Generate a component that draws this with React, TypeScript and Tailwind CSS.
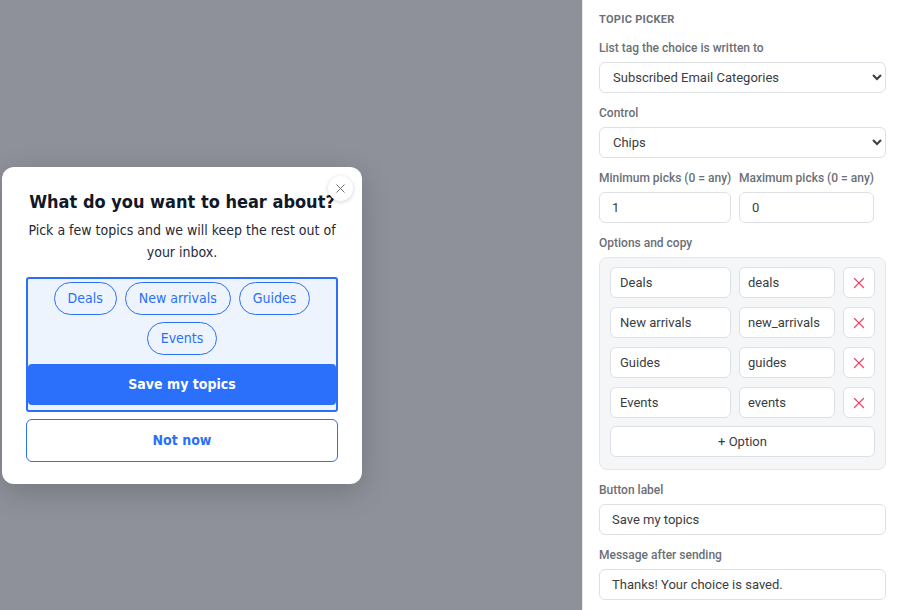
import { X } from "lucide-react";

const modalFont = {
  fontFamily: '"DejaVu Sans Condensed", "DejaVu Sans", sans-serif',
};

const topics = ["Deals", "New arrivals", "Guides", "Events"];

const options = [
  { label: "Deals", value: "deals" },
  { label: "New arrivals", value: "new_arrivals" },
  { label: "Guides", value: "guides" },
  { label: "Events", value: "events" },
];

const Field = ({ label, children }: { label: string; children: React.ReactNode }) => (
  <div className="flex flex-col">
    <span className="mb-[6px] h-4 whitespace-nowrap text-[12px] leading-4 font-medium text-[#6b6f76]">{label}</span>
    {children}
  </div>
);

const inputCls =
  "h-[31px] w-full min-w-0 rounded-md border border-[#dde0e5] bg-white px-3 text-[13px] text-[#3a3d42] outline-none";

const App = () => {
  return (
    <div className="flex h-[610px] w-[902px] overflow-hidden font-['Roboto',sans-serif]">
      {/* Preview canvas */}
      <div className="flex flex-1 items-start bg-[#8e9199] pl-[2px] pt-[167px]">
        <div
          style={modalFont}
          className="relative w-[360px] rounded-xl bg-white px-6 pt-[23px] pb-[22px] text-center shadow-[0_8px_30px_rgba(0,0,0,0.18)]"
        >
          <button className="absolute top-[9px] right-[9px] flex h-[25px] w-[25px] items-center justify-center rounded-full bg-white shadow-[0_1px_4px_rgba(0,0,0,0.18)]">
            <X size={15} strokeWidth={1.6} color="#6f737b" />
          </button>
          <h2 className="text-[18px] leading-6 font-bold text-[#111827]">What do you want to hear about?</h2>
          <p className="mt-[5px] text-[14px] leading-[22px] text-[#1f2937]">
            Pick a few topics and we will keep the rest out of your inbox.
          </p>
          <div className="mt-[14px] rounded-[3px] border-2 border-[#2a6ff7] bg-[#eef4fd]">
            <div className="flex flex-wrap justify-center gap-x-2 gap-y-[7px] px-6 pt-[3px]">
              {topics.map((t) => (
                <span
                  key={t}
                  className="flex h-[33px] items-center rounded-full border border-[#2a6ff7] px-[13px] text-[14px] text-[#2a6ff7]"
                >
                  {t}
                </span>
              ))}
            </div>
            <button className="mt-[9px] mb-[5px] h-[41px] w-full rounded-[4px] bg-[#2b70fa] text-[14px] font-bold text-white">
              Save my topics
            </button>
          </div>
          <button className="mt-[7px] h-[43px] w-full rounded-md border border-[#2a6ff7] bg-white text-[14px] font-bold text-[#2a6ff7]">
            Not now
          </button>
        </div>
      </div>

      {/* Settings panel */}
      <div className="flex w-[320px] flex-col gap-[12px] border-l border-[#e3e6ea] bg-white pt-[13px] pr-4 pl-[16px]">
        <div className="h-[15px] text-[11px] leading-[14px] font-bold tracking-wide text-[#6b7079]">TOPIC PICKER</div>

        <Field label="List tag the choice is written to">
          <select className={inputCls + " pl-[9px]"} defaultValue="sec">
            <option value="sec">Subscribed Email Categories</option>
          </select>
        </Field>

        <Field label="Control">
          <select className={inputCls + " pl-[9px]"} defaultValue="chips">
            <option value="chips">Chips</option>
          </select>
        </Field>

        <div className="flex gap-2">
          <div className="w-[132px]">
            <Field label="Minimum picks (0 = any)">
              <input className={inputCls} defaultValue="1" />
            </Field>
          </div>
          <div className="w-[135px]">
            <Field label="Maximum picks (0 = any)">
              <input className={inputCls} defaultValue="0" />
            </Field>
          </div>
        </div>

        <Field label="Options and copy">
          <div className="rounded-lg border border-[#e3e6ea] bg-[#f5f6f8] px-[10px] pt-[9px] pb-[12px]">
            <div className="flex flex-col gap-[9px]">
              {options.map((o) => (
                <div key={o.value} className="grid grid-cols-[1fr_96px_32px] gap-2">
                  <input className={inputCls + " px-[9px]"} defaultValue={o.label} />
                  <input className={inputCls + " px-[8px]"} defaultValue={o.value} />
                  <button className="flex h-[31px] items-center justify-center rounded-md border border-[#dde0e5] bg-white">
                    <X size={18} strokeWidth={1.7} color="#e8476e" />
                  </button>
                </div>
              ))}
            </div>
            <button className="mt-[8px] h-[31px] w-full rounded-md border border-[#dde0e5] bg-white text-[13px] text-[#3a3d42]">
              + Option
            </button>
          </div>
        </Field>

        <Field label="Button label">
          <input className={inputCls} defaultValue="Save my topics" />
        </Field>

        <Field label="Message after sending">
          <input className={inputCls} defaultValue="Thanks! Your choice is saved." />
        </Field>
      </div>
    </div>
  );
};

export default App;
